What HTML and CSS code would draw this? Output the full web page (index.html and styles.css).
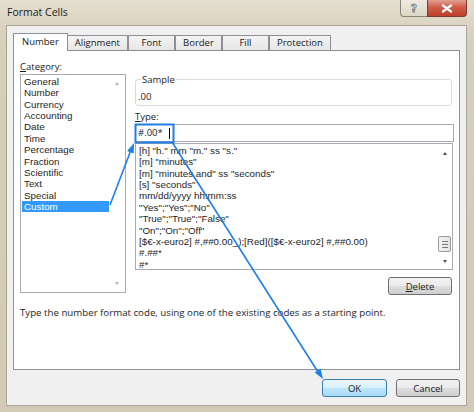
FILE: index.html
```html
<!DOCTYPE html>
<html>
<head>
<meta charset="utf-8">
<title>Format Cells</title>
<link rel="stylesheet" href="styles.css">
</head>
<body>
<div class="window">
  <div class="titlebar">
    <span class="title">Format Cells</span>
    <div class="caption">
      <div class="cbtn help"><span class="qmark">?</span></div>
      <div class="cbtn close">
        <svg width="12" height="9" viewBox="0 0 12 9"><path d="M2 1.5 L10 7.5 M10 1.5 L2 7.5" stroke="#fff" stroke-width="2.2" stroke-linecap="round"/></svg>
      </div>
    </div>
  </div>
  <div class="client">
    <div class="tabs">
      <div class="tab active">Number</div>
      <div class="tab">Alignment</div>
      <div class="tab">Font</div>
      <div class="tab">Border</div>
      <div class="tab">Fill</div>
      <div class="tab">Protection</div>
    </div>
    <div class="panel">
      <div class="panel-row">
        <div class="cat-col">
          <div class="label"><u>C</u>ategory:</div>
          <div class="listbox">
            <ul class="items cat-items">
              <li>General</li>
              <li>Number</li>
              <li>Currency</li>
              <li>Accounting</li>
              <li>Date</li>
              <li>Time</li>
              <li>Percentage</li>
              <li>Fraction</li>
              <li>Scientific</li>
              <li>Text</li>
              <li>Special</li>
              <li class="selected">Custom</li>
            </ul>
            <div class="vscroll disabled">
              <span class="arr up"></span>
              <span class="arr down"></span>
            </div>
          </div>
        </div>
        <div class="main-col">
          <fieldset class="sample">
            <legend>Sample</legend>
            <div class="sample-val">.00</div>
          </fieldset>
          <div class="label type-label"><u>T</u>ype:</div>
          <div class="type-input">#.00*<span class="caret"></span></div>
          <div class="fmt-list">
            <ul class="items fmt-items">
              <li>[h] "h." mm "m." ss "s."</li>
              <li>[m] "minutes"</li>
              <li>[m] "minutes and" ss "seconds"</li>
              <li>[s] "seconds"</li>
              <li>mm/dd/yyyy hh:mm:ss</li>
              <li>"Yes";"Yes";"No"</li>
              <li>"True";"True";"False"</li>
              <li>"On";"On";"Off"</li>
              <li>[$€-x-euro2] #,##0.00_);[Red]([$€-x-euro2] #,##0.00)</li>
              <li>#.##*</li>
              <li>#*</li>
            </ul>
            <div class="vscroll">
              <span class="arr up dark"></span>
              <span class="thumb"><i></i><i></i><i></i></span>
              <span class="arr down dark"></span>
            </div>
          </div>
          <div class="delete-row"><button class="btn"><u>D</u>elete</button></div>
        </div>
      </div>
      <p class="desc">Type the number format code, using one of the existing codes as a starting point.</p>
    </div>
    <div class="footer">
      <button class="btn default">OK</button>
      <button class="btn">Cancel</button>
    </div>
  </div>
  <svg class="annot" width="474" height="412" viewBox="0 0 474 412">
    <rect x="135.5" y="124.5" width="38" height="18" fill="none" stroke="#1f7fe6" stroke-width="2"/>
    <line x1="110" y1="205" x2="131" y2="150" stroke="#1f7fe6" stroke-width="1.6"/>
    <polygon points="134,143 133.7,153.6 127.1,151" fill="#1f7fe6"/>
    <line x1="172" y1="142" x2="318" y2="372" stroke="#1f7fe6" stroke-width="1.6"/>
    <polygon points="323,379 314.7,372.4 320.6,368.7" fill="#1f7fe6"/>
  </svg>
</div>
</body>
</html>
```
FILE: styles.css
```css
* { box-sizing: border-box; }
html, body { margin: 0; padding: 0; }
body {
  width: 474px;
  height: 412px;
  overflow: hidden;
  font-family: "Open Sans", "Noto Sans", sans-serif;
  font-size: 9.5px;
  color: #1e1e1e;
  background: #d3cbb6;
}
.window {
  position: relative;
  width: 474px;
  height: 412px;
  background: linear-gradient(#e4decf, #d6cfbb 40px, #d2cab5);
  padding: 0 7px 6px 6px;
  display: flex;
  flex-direction: column;
}
.titlebar {
  height: 25px;
  display: flex;
  align-items: flex-start;
  flex: none;
}
.title {
  font-size: 10.5px;
  padding-top: 5px;
  padding-left: 1px;
  color: #1b1b1b;
}
.caption { margin-left: auto; display: flex; }
.cbtn {
  height: 17px;
  display: flex;
  align-items: center;
  justify-content: center;
}
.help {
  width: 27px;
  border: 1px solid #8a8474;
  border-top: none;
  border-right: none;
  border-radius: 0 0 0 4px;
  background: linear-gradient(#eeeae1, #dcd6c7);
}
.qmark {
  font-family: "DejaVu Sans", sans-serif;
  font-weight: bold;
  font-size: 10px;
  color: #f4f4f4;
  -webkit-text-stroke: 0.8px #6e7680;
}
.close {
  width: 40px;
  border: 1px solid #7b3b30;
  border-top: none;
  border-radius: 0 0 4px 0;
  background: linear-gradient(#e3a091, #cf5d49 45%, #bd3f2b);
}
.client {
  flex: 1;
  background: #f0f0f0;
  border: 1px solid #a9a496;
  padding: 7px 6px 8px 6px;
  display: flex;
  flex-direction: column;
}
.tabs {
  display: flex;
  align-items: flex-end;
  height: 18px;
  margin-bottom: -1px;
  position: relative;
  z-index: 1;
  flex: none;
}
.tab {
  height: 15px;
  margin-bottom: 1px;
  min-width: 47px;
  padding: 0 7px;
  border: 1px solid #8e8f94;
  border-bottom: none;
  margin-right: 0;
  background: linear-gradient(#f4f4f4, #e6e6e6);
  text-align: center;
  line-height: 13px;
  color: #1a1a1a;
}
.tab + .tab { margin-left: -1px; margin-right: 1px; }
.tab.active {
  height: 18px;
  margin-bottom: 0;
  background: #fff;
  line-height: 16px;
  padding: 0 8px;
  position: relative;
  z-index: 2;
}
.panel {
  height: 320px;
  flex: none;
  background: #fff;
  border: 1px solid #8e8f94;
  padding: 9px 5px 0 6px;
  display: flex;
  flex-direction: column;
}
.panel-row { display: flex; gap: 9px; }
.cat-col { width: 106px; flex: none; }
.main-col { flex: 1; display: flex; flex-direction: column; }
.label { line-height: 13px; height: 13px; margin-bottom: 1px; }
.listbox {
  height: 219px;
  border: 1px solid #a8abb2;
  display: flex;
  padding: 1px 0 0 1px;
}
.items {
  list-style: none;
  margin: 0;
  padding: 0;
  flex: 1;
  font-family: "Liberation Sans", Arial, sans-serif;
  font-size: 9.8px;
}
.items li { white-space: nowrap; height: 11.36px; line-height: 11.36px; padding-left: 2px; }
.cat-items li.selected { background: #3399ff; color: #fff; }
.vscroll {
  width: 16px;
  flex: none;
  position: relative;
  display: flex;
  flex-direction: column;
  align-items: center;
}
.arr {
  width: 0;
  height: 0;
  border-left: 2.5px solid transparent;
  border-right: 2.5px solid transparent;
}
.arr.up { border-bottom: 3px solid #b4b4b4; margin-top: 6px; }
.arr.down { border-top: 3px solid #b4b4b4; margin-top: auto; margin-bottom: 7px; }
.arr.up.dark { border-bottom-color: #505050; margin-top: 7px; }
.arr.down.dark { border-top-color: #505050; margin-top: 0; margin-bottom: 6px; }
.sample {
  margin: 13px 2px 0 0;
  border: 1px solid #d5dbe0;
  border-radius: 3px;
  padding: 4px 2px 2px 2px;
  min-width: 0;
}
.sample legend {
  line-height: 13px;
  padding: 0 1px;
  margin-left: 3px;
}
.sample-val { line-height: 13px; height: 13px; }
.type-label { margin-top: 4px; }
.type-input {
  height: 18px;
  border: 1px solid #a8abb2;
  padding-left: 2px;
  line-height: 16px;
  display: flex;
  align-items: center;
}
.caret {
  display: inline-block;
  width: 1px;
  height: 11px;
  background: #000;
  margin-left: 6px;
}
.fmt-list {
  height: 127px;
  margin-top: 1px;
  margin-right: 1px;
  border: 1px solid #a8abb2;
  padding: 1px 0 0 1px;
  display: flex;
}
.fmt-list .vscroll { width: 15px; }
.thumb {
  margin-top: auto;
  margin-bottom: 8px;
  width: 13px;
  height: 16px;
  border: 1px solid #9a9a9a;
  border-radius: 2px;
  background: linear-gradient(90deg, #f3f3f3, #e2e2e2);
  display: flex;
  flex-direction: column;
  align-items: center;
  justify-content: center;
  gap: 2px;
}
.thumb i { display: block; width: 6px; height: 1px; background: #7a7a7a; }
.delete-row { display: flex; justify-content: flex-end; margin-top: 7px; padding-right: 2px; }
.btn {
  font: inherit;
  color: #1a1a1a;
  width: 64px;
  height: 18px;
  padding: 0;
  border: 1px solid #707070;
  border-radius: 3px;
  background: linear-gradient(#f2f2f2, #ebebeb 50%, #dddddd 51%, #cfcfcf);
  line-height: 15px;
  text-align: center;
}
.btn.default {
  width: 65px;
  border-color: #3c7fb1;
  background: linear-gradient(#eaf6fd, #d9f0fc 50%, #bee6fd 51%, #a7d9f5);
}
.desc { margin: 11px 0 0 0; line-height: 13px; font-size: 9.7px; }
.footer {
  display: flex;
  justify-content: flex-end;
  gap: 9px;
  margin-top: 9px;
}
.annot { position: absolute; left: 0; top: 0; pointer-events: none; }
```
